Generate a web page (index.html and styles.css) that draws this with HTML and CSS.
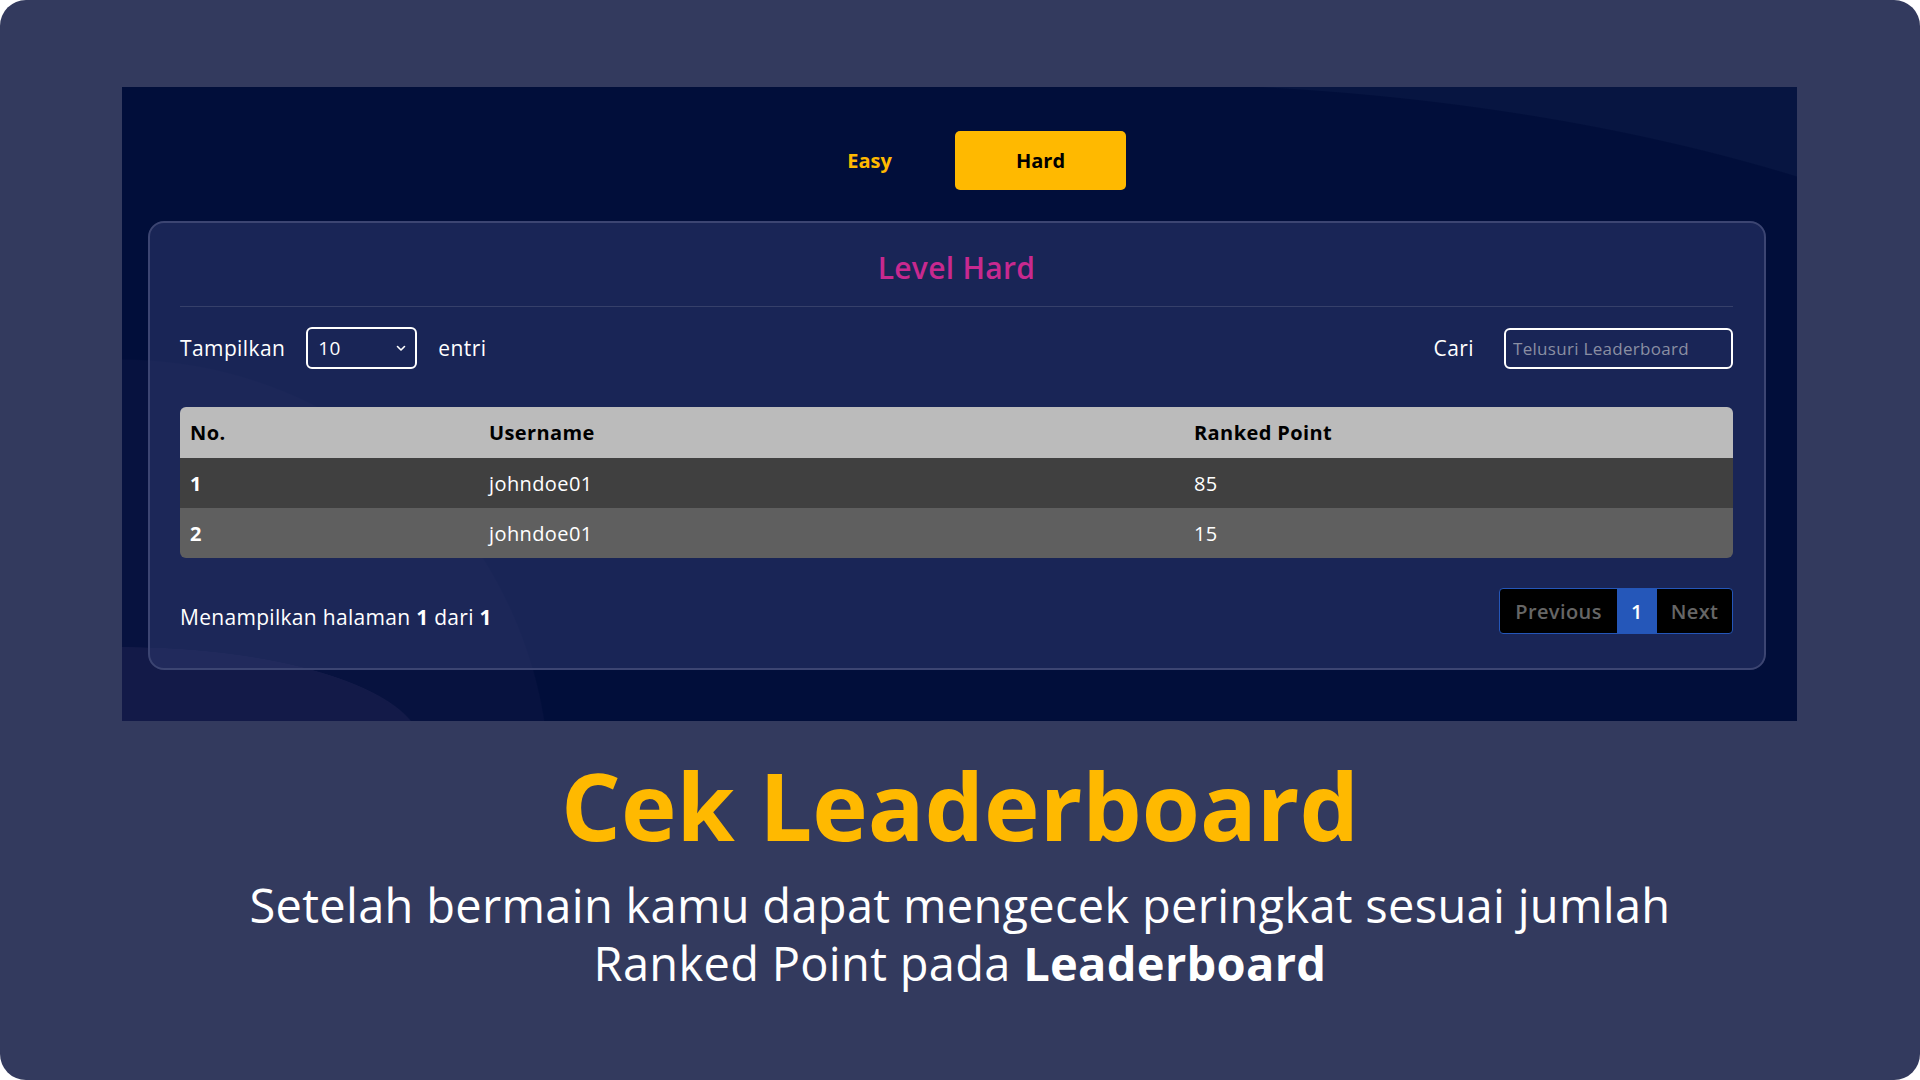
FILE: index.html
```html
<!DOCTYPE html>
<html lang="id">
<head>
<meta charset="utf-8">
<title>Cek Leaderboard</title>
<link rel="stylesheet" href="styles.css">
</head>
<body>
<div class="frame">
  <section class="panel">
    <div class="tabs">
      <button class="tab">Easy</button>
      <button class="tab tab-active">Hard</button>
    </div>
    <div class="card">
      <div class="card-head">
        <h2 class="level-title">Level Hard</h2>
      </div>
      <div class="controls">
        <div class="length">
          <span>Tampilkan</span>
          <div class="select">
            <span>10</span>
            <svg class="chev" width="10" height="7" viewBox="0 0 10 7"><path d="M1.5 1.5 L5 5 L8.5 1.5" fill="none" stroke="#fff" stroke-width="1.6" stroke-linecap="round" stroke-linejoin="round"/></svg>
          </div>
          <span>entri</span>
        </div>
        <div class="search">
          <span>Cari</span>
          <input class="search-input" type="text" placeholder="Telusuri Leaderboard">
        </div>
      </div>
      <table class="board">
        <thead>
          <tr><th class="c1">No.</th><th class="c2">Username</th><th class="c3">Ranked Point</th></tr>
        </thead>
        <tbody>
          <tr class="r1"><td class="num">1</td><td>johndoe01</td><td>85</td></tr>
          <tr class="r2"><td class="num">2</td><td>johndoe01</td><td>15</td></tr>
        </tbody>
      </table>
      <div class="foot">
        <p class="info">Menampilkan halaman <b>1</b> dari <b>1</b></p>
        <div class="pager">
          <span class="pg pg-dis pg-prev">Previous</span>
          <span class="pg pg-on">1</span>
          <span class="pg pg-dis pg-next">Next</span>
        </div>
      </div>
    </div>
  </section>
  <h1 class="headline">Cek Leaderboard</h1>
  <p class="sub">Setelah bermain kamu dapat mengecek peringkat sesuai jumlah<br>Ranked Point pada <b>Leaderboard</b></p>
</div>
</body>
</html>
```

FILE: styles.css
```css
* { box-sizing: border-box; }
html, body { margin: 0; padding: 0; background: #ffffff; }
body { font-family: "Open Sans", "Noto Sans", sans-serif; }

.frame {
  width: 1920px;
  height: 1080px;
  background: #333a5e;
  border-radius: 26px;
  padding-top: 87px;
  display: flex;
  flex-direction: column;
  align-items: flex-start;
}

.panel {
  margin-left: 122px;
  width: 1675px;
  height: 634px;
  padding: 44px 31px 0 26px;
  background:
    radial-gradient(ellipse 300px 100px at 0px 660px, #131a48 99.5%, transparent 100%) left top / 100% 100% no-repeat,
    radial-gradient(circle 428px at 0px 700px, #07123f 99.7%, transparent 100%) left top / 100% 100% no-repeat,
    radial-gradient(ellipse 1167px 504px at 0px 500px, transparent 99.8%, #071541 100%) right top / 675px 300px no-repeat,
    #010e3a;
  display: flex;
  flex-direction: column;
}

.tabs {
  display: flex;
  justify-content: center;
  margin-right: 4px;
}
.tab {
  width: 171px;
  height: 59px;
  border: none;
  border-radius: 5px;
  background: transparent;
  color: #ffb900;
  font-family: inherit;
  font-weight: 700;
  font-size: 20px;
  padding: 0;
}
.tab-active { background: #ffb900; color: #000; }

.card {
  margin-top: 31px;
  height: 449px;
  border: 2px solid #3c4572;
  border-radius: 16px;
  background: rgba(45, 56, 110, 0.55);
  padding: 0 31px 0 30px;
  display: flex;
  flex-direction: column;
}

.card-head {
  height: 84px;
  border-bottom: 1px solid #36406a;
  display: flex;
  align-items: center;
  justify-content: center;
  padding-top: 6px;
}
.level-title {
  margin: 0;
  color: #c8298f;
  font-size: 30px;
  font-weight: 600;
  letter-spacing: 0.3px;
}

.controls {
  margin-top: 20px;
  height: 42px;
  display: flex;
  justify-content: space-between;
  align-items: center;
  color: #fff;
  font-size: 21px;
  letter-spacing: 0.4px;
}
.length, .search { display: flex; align-items: center; }
.length { gap: 21px; }
.search { gap: 30px; }

.select {
  position: relative;
  width: 111px;
  height: 42px;
  border: 2px solid #fff;
  border-radius: 6px;
  display: flex;
  align-items: center;
  padding-left: 10px;
  font-size: 19px;
}
.chev { position: absolute; right: 9px; top: 16px; }

.search-input {
  width: 229px;
  height: 41px;
  border: 2px solid #fff;
  border-radius: 6px;
  background: transparent;
  color: #fff;
  font-family: inherit;
  font-size: 17px;
  letter-spacing: 0.3px;
  padding: 0 7px;
  outline: none;
}
.search-input::placeholder { color: #8a8fa3; }

.board {
  margin-top: 38px;
  width: 100%;
  border-collapse: separate;
  border-spacing: 0;
  font-size: 20px;
  letter-spacing: 0.4px;
  color: #fff;
}
.board th, .board td {
  text-align: left;
  padding: 0 10px;
}
.board th {
  height: 51px;
  background: #bbbbbb;
  color: #000;
  font-weight: 700;
}
.board td { height: 50px; }
.c1 { width: 299px; border-top-left-radius: 6px; }
.c2 { width: 705px; }
.c3 { border-top-right-radius: 6px; }
.r1 td { background: #404040; }
.r2 td { background: #5f5f5f; }
.r2 td:first-child { border-bottom-left-radius: 6px; }
.r2 td:last-child { border-bottom-right-radius: 6px; }
.num { font-weight: 700; }

.foot {
  margin-top: 30px;
  display: flex;
  justify-content: space-between;
  align-items: center;
}
.info {
  margin: 12px 0 0;
  color: #fff;
  font-size: 21px;
  letter-spacing: 0.3px;
}
.info b { font-weight: 700; }

.pager {
  display: flex;
  height: 46px;
  border: 1px solid #2456b8;
  border-radius: 4px;
  overflow: hidden;
  background: #000;
}
.pg {
  display: flex;
  align-items: center;
  justify-content: center;
  font-size: 20px;
  font-weight: 600;
  letter-spacing: 0.4px;
}
.pg-prev { width: 117px; }
.pg-next { width: 75px; }
.pg-dis { color: #666666; }
.pg-on { background: #2557b9; color: #fff; width: 40px; }

.headline {
  align-self: center;
  margin: 24px 0 0;
  color: #ffb900;
  font-size: 94px;
  font-weight: 700;
  line-height: 120px;
  letter-spacing: 0;
}
.sub {
  align-self: center;
  margin: 11px 0 0;
  text-align: center;
  color: #fff;
  font-size: 47px;
  line-height: 58px;
  letter-spacing: 0.3px;
}
.sub b { font-weight: 700; }
```
